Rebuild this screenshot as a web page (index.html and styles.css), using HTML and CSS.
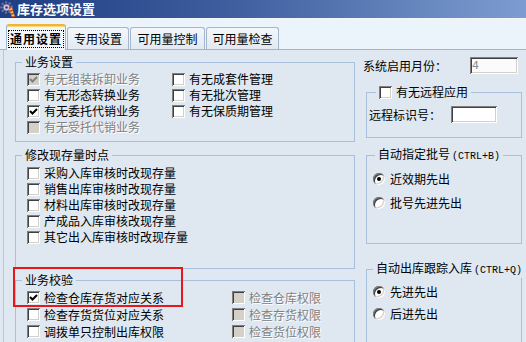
FILE: index.html
```html
<!DOCTYPE html>
<html lang="zh-CN">
<head>
    <meta charset="UTF-8">
    <title>库存选项设置</title>
    <link rel="stylesheet" href="styles.css">
</head>
<body>
    <div class="titlebar">
        <svg class="app-icon" viewBox="0 0 16 16">
            <circle cx="6.5" cy="6.5" r="5" fill="none" stroke="#6f6c9e" stroke-width="2.6" stroke-dasharray="2 1.6"/>
            <circle cx="6.5" cy="6.5" r="3.6" fill="#c9c7e2" stroke="#55527e" stroke-width="1"/>
            <circle cx="6.5" cy="6.5" r="1.3" fill="#3d3a63"/>
            <line x1="10" y1="6" x2="13.5" y2="16" stroke="#f4d23a" stroke-width="3"/>
            <line x1="10" y1="6" x2="13.5" y2="16" stroke="#d8342a" stroke-width="3" stroke-dasharray="1.6 1.6"/>
        </svg>
        <span class="title">库存选项设置</span>
    </div>

    <div class="tabstrip">
        <div class="tab active"><span class="focus">通用设置</span></div>
        <div class="tab w2">专用设置</div>
        <div class="tab w3">可用量控制</div>
        <div class="tab w4">可用量检查</div>
    </div>

    <div class="page">
        <div class="col-left">
            <fieldset class="group">
                <legend>业务设置</legend>
                <div class="body g1">
                    <div class="list w145">
                        <label class="opt disabled"><span class="cb checked"><svg viewBox="0 0 13 13"><path d="M3 6l2.5 2.5L10 4"/></svg></span>有无组装拆卸业务</label>
                        <label class="opt"><span class="cb"></span>有无形态转换业务</label>
                        <label class="opt"><span class="cb checked"><svg viewBox="0 0 13 13"><path d="M3 6l2.5 2.5L10 4"/></svg></span>有无委托代销业务</label>
                        <label class="opt disabled"><span class="cb"></span>有无受托代销业务</label>
                    </div>
                    <div class="list">
                        <label class="opt"><span class="cb"></span>有无成套件管理</label>
                        <label class="opt"><span class="cb"></span>有无批次管理</label>
                        <label class="opt"><span class="cb"></span>有无保质期管理</label>
                    </div>
                </div>
            </fieldset>

            <fieldset class="group g2-box">
                <legend>修改现存量时点</legend>
                <div class="body g2">
                    <div class="list">
                        <label class="opt"><span class="cb"></span>采购入库审核时改现存量</label>
                        <label class="opt"><span class="cb"></span>销售出库审核时改现存量</label>
                        <label class="opt"><span class="cb"></span>材料出库审核时改现存量</label>
                        <label class="opt"><span class="cb"></span>产成品入库审核改现存量</label>
                        <label class="opt"><span class="cb"></span>其它出入库审核时改现存量</label>
                    </div>
                </div>
            </fieldset>

            <fieldset class="group g3-box">
                <legend>业务校验</legend>
                <div class="body g3">
                    <div class="list tall w205">
                        <label class="opt"><span class="cb checked"><svg viewBox="0 0 13 13"><path d="M3 6l2.5 2.5L10 4"/></svg></span>检查仓库存货对应关系</label>
                        <label class="opt"><span class="cb"></span>检查存货货位对应关系</label>
                        <label class="opt"><span class="cb"></span>调拨单只控制出库权限</label>
                    </div>
                    <div class="list tall">
                        <label class="opt disabled"><span class="cb"></span>检查仓库权限</label>
                        <label class="opt disabled"><span class="cb"></span>检查存货权限</label>
                        <label class="opt disabled"><span class="cb"></span>检查货位权限</label>
                    </div>
                </div>
            </fieldset>
        </div>

        <div class="col-right">
            <div class="field-row month">
                <span class="field-label">系统启用月份：</span>
                <input class="edit month-edit" value="4" disabled>
            </div>

            <fieldset class="group side g4-box">
                <legend><label class="opt"><span class="cb"></span>有无远程应用</label></legend>
                <div class="body g4">
                    <div class="field-row">
                        <span class="field-label">远程标识号：</span>
                        <input class="edit remote-edit" value="">
                    </div>
                </div>
            </fieldset>

            <fieldset class="group side g5-box">
                <legend>自动指定批号<span class="key">(CTRL+B)</span></legend>
                <div class="body g5">
                    <label class="opt radio-row"><span class="rb on"></span>近效期先出</label>
                    <label class="opt radio-row"><span class="rb"></span>批号先进先出</label>
                </div>
            </fieldset>

            <fieldset class="group side g6-box">
                <legend>自动出库跟踪入库<span class="key">(CTRL+Q)</span></legend>
                <div class="body g6">
                    <label class="opt radio-row"><span class="rb on"></span>先进先出</label>
                    <label class="opt radio-row"><span class="rb"></span>后进先出</label>
                </div>
            </fieldset>
        </div>
    </div>

    <div class="callout"></div>
</body>
</html>
```

FILE: styles.css
```css
body {
    margin: 0;
    width: 526px;
    height: 342px;
    overflow: hidden;
    position: relative;
    background-color: #dfe8f1;
    color: #000;
    font-family: "Noto Sans CJK SC", "Noto Sans", sans-serif;
    font-size: 12px;
    line-height: 16px;
}

/* title bar */
.titlebar {
    height: 18px;
    display: flex;
    align-items: center;
    background: linear-gradient(to right, #1f3d82, #3f5f9f 45%, #7d9dd1);
    border-bottom: 1px solid #f2f6fb;
    color: #fff;
}
.app-icon {
    width: 16px;
    height: 16px;
    flex: none;
}
.title {
    margin-left: 1px;
    font-size: 13px;
    font-weight: bold;
    line-height: 18px;
}

/* tabs */
.tabstrip {
    height: 31px;
    box-sizing: border-box;
    display: flex;
    align-items: flex-end;
    padding-left: 6px;
    background-color: #ebf3fb;
    border-bottom: 1px solid #9fb4cc;
}
.tab {
    height: 22px;
    box-sizing: border-box;
    margin-left: 1px;
    display: flex;
    align-items: center;
    justify-content: center;
    border: 1px solid #a3b6cc;
    border-bottom: none;
    border-radius: 3px 3px 0 0;
    background: linear-gradient(#f3f7fb, #e1e9f2);
}
.tab.active {
    width: 60px;
    height: 26px;
    margin-left: 0;
    margin-bottom: -1px;
    border-top: 2px solid #f0b43c;
    box-shadow: inset 0 1px #ffd978;
    background: #f3f7fb;
    font-weight: bold;
    letter-spacing: 1px;
}
.focus {
    width: 56px;
    height: 18px;
    box-sizing: border-box;
    display: flex;
    align-items: center;
    justify-content: center;
    border: 1px dotted #000;
    margin-top: 1px;
}
.w2 { width: 62px; }
.w3 { width: 75px; }
.w4 { width: 73px; }

/* page */
.page {
    display: flex;
    gap: 8px;
    margin-left: 3px;
    padding: 5px 0 0 11px;
    border-left: 1px solid #b4c7dd;
}
.col-left {
    width: 340px;
    flex: none;
}
.col-right {
    width: 159px;
    flex: none;
}

/* group boxes */
.group {
    margin: 0;
    padding: 0;
    min-width: 0;
    border: 1px solid #a9c0dc;
}
.group legend {
    margin-left: 6px;
    padding: 0 3px;
    line-height: 14px;
    white-space: nowrap;
}
.body {
    display: flex;
}
.g1 { padding: 2px 0 6px 11px; }
.g2-box { margin-top: 6px; }
.g2 { padding: 3px 0 23px 11px; }
.g3-box { margin-top: 4px; }
.g3 { padding: 2px 0 10px 11px; }

.list {
    display: flex;
    flex-direction: column;
}
.w145 { width: 145px; }
.w205 { width: 205px; }

.opt {
    height: 16px;
    display: flex;
    align-items: center;
    gap: 4px;
    white-space: nowrap;
}
.tall .opt {
    height: 17px;
}
.opt.disabled {
    color: #808080;
    text-shadow: 1px 1px #fff;
}

/* classic sunken checkbox */
.cb {
    width: 13px;
    height: 13px;
    flex: none;
    background-color: #fff;
    box-shadow: inset 1px 1px #808080, inset -1px -1px #fff, inset 2px 2px #404040, inset -2px -2px #d4d0c8;
}
.cb svg {
    display: block;
    width: 13px;
    height: 13px;
}
.cb path {
    fill: none;
    stroke: #000;
    stroke-width: 2;
}
.disabled .cb {
    background-color: #d4d0c8;
}
.disabled .cb path {
    stroke: #808080;
}

/* radio */
.rb {
    width: 12px;
    height: 12px;
    flex: none;
    border-radius: 50%;
    background-color: #fff;
    box-shadow: inset 1px 1px #808080, inset -1px -1px #fff, inset 2px 2px #404040, inset -2px -2px #d4d0c8;
    display: flex;
    align-items: center;
    justify-content: center;
}
.rb.on::after {
    content: "";
    width: 4px;
    height: 4px;
    border-radius: 50%;
    background-color: #000;
}
.radio-row {
    gap: 5px;
}

/* right column */
.field-row {
    height: 17px;
    display: flex;
    align-items: center;
}
.month {
    margin-top: 2px;
}
.field-label {
    flex: none;
}
.edit {
    height: 17px;
    box-sizing: border-box;
    margin: 0;
    padding: 0 2px;
    border: none;
    background-color: #fff;
    box-shadow: inset 1px 1px #808080, inset -1px -1px #fff, inset 2px 2px #404040, inset -2px -2px #d4d0c8;
    font-family: "DejaVu Sans", sans-serif;
    font-size: 11px;
    color: #000;
}
.edit:disabled {
    background-color: #fbfbfb;
    color: #8a8a8a;
}
.month-edit {
    width: 48px;
    margin-left: auto;
    margin-right: 4px;
}
.remote-edit {
    width: 46px;
    margin-left: 10px;
}

.side {
    margin-left: 3px;
}
.g4-box { margin-top: 10px; }
.g4-box legend { margin-left: 9px; }
.g4 { padding: 6px 0 14px 2px; }

.g5-box { margin-top: 9px; }
.g5-box legend { margin-left: 8px; }
.g5 {
    flex-direction: column;
    gap: 8px;
    padding: 7px 0 32px 6px;
}

.g6-box { margin-top: 17px; }
.g6-box legend { margin-left: 6px; }
.g6 {
    flex-direction: column;
    gap: 6px;
    padding: 6px 0 25px 6px;
}

.key {
    margin-left: 2px;
    font-family: "Liberation Mono", monospace;
    font-size: 10px;
}

/* red annotation frame */
.callout {
    position: absolute;
    left: 13px;
    top: 267px;
    width: 170px;
    height: 40px;
    box-sizing: border-box;
    border: 2px solid #e8161d;
}
```
